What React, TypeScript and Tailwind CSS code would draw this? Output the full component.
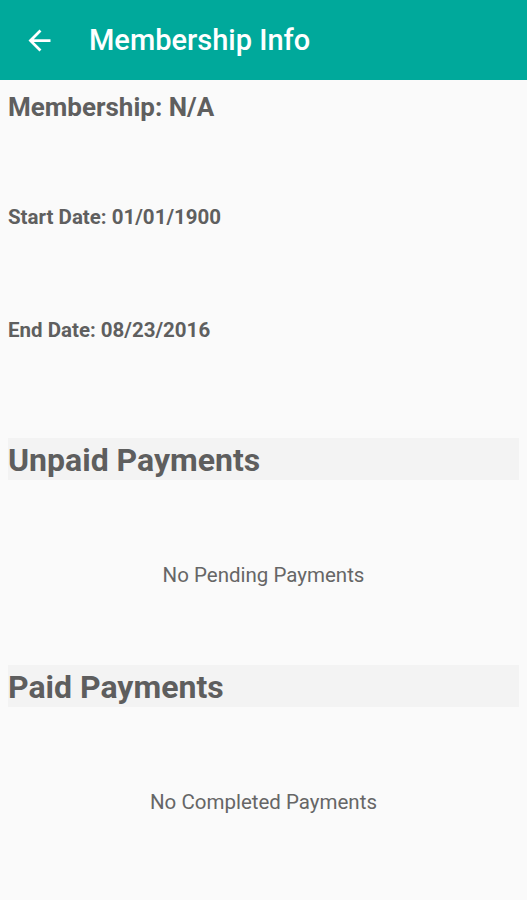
function BackArrow() {
  return (
    <svg viewBox="0 0 24 24" className="w-[33px] h-[33px]" fill="currentColor">
      <path d="M20 11H7.83l5.59-5.59L12 4l-8 8 8 8 1.41-1.41L7.83 13H20v-2z" />
    </svg>
  );
}

function SectionTitle({ title }: { title: string }) {
  return (
    <div className="h-[42px] pt-[2px] bg-[#f3f3f3]">
      <h2 className="text-[32px] leading-[40px] font-bold text-[#5e5e5e]">{title}</h2>
    </div>
  );
}

export default function App() {
  return (
    <div className="min-h-screen w-full bg-[#fafafa]" style={{ fontFamily: 'Roboto, "Noto Sans", sans-serif' }}>
      <header className="h-[80px] bg-[#00a99b] flex items-center">
        <button className="ml-[23px] text-white">
          <BackArrow />
        </button>
        <h1 className="ml-[33px] text-[29px] font-medium text-white leading-none">Membership Info</h1>
      </header>

      <main className="px-2">
        <p className="mt-[12px] text-[26px] leading-[30px] font-bold text-[#5f5f5f]">Membership: N/A</p>
        <p className="mt-[83px] text-[20.5px] leading-[24px] font-bold text-[#5f5f5f]">Start Date: 01/01/1900</p>
        <p className="mt-[89px] text-[20.5px] leading-[24px] font-bold text-[#5f5f5f]">End Date: 08/23/2016</p>

        <section className="mt-[96px]">
          <SectionTitle title="Unpaid Payments" />
          <p className="mt-[83px] text-center text-[20.5px] leading-[24px] text-[#666666]">No Pending Payments</p>
        </section>

        <section className="mt-[78px]">
          <SectionTitle title="Paid Payments" />
          <p className="mt-[83px] text-center text-[20.5px] leading-[24px] text-[#666666]">No Completed Payments</p>
        </section>
      </main>
    </div>
  );
}
